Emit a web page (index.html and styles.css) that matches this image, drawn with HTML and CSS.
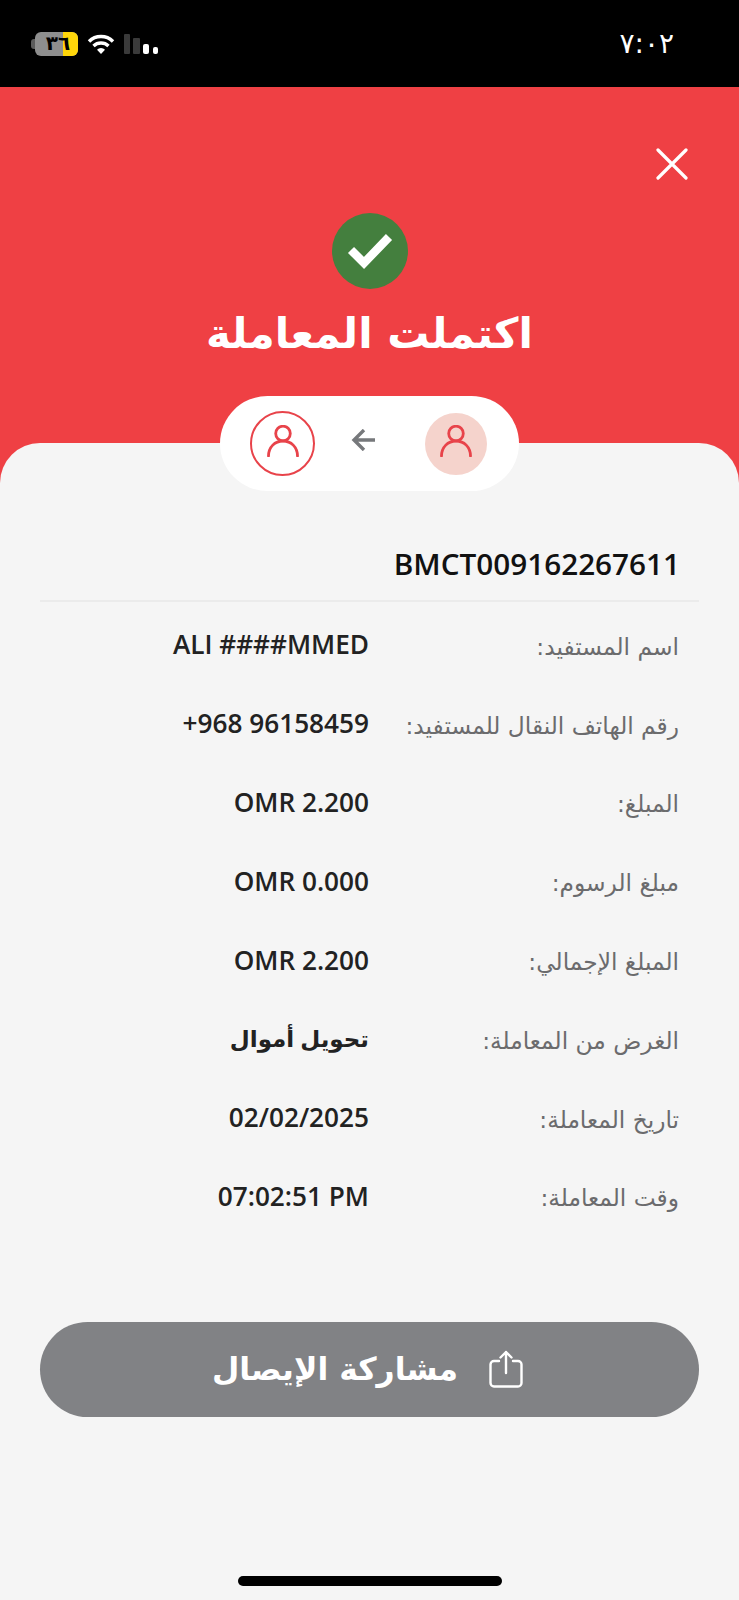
FILE: index.html
```html
<!DOCTYPE html>
<html lang="ar" dir="rtl">
<head>
    <meta charset="UTF-8">
    <meta name="viewport" content="width=device-width, initial-scale=1.0">
    <title>اكتملت المعاملة</title>
    <link rel="stylesheet" href="styles.css">
</head>
<body>
    <header class="statusBar">
        <span class="clock">٧:٠٢</span>
        <div class="statusIcons">
            <svg class="signal" width="36" height="22" viewBox="0 0 36 22">
                <rect x="0" y="1" width="6" height="20" rx="1" fill="#3a3a3a"/>
                <rect x="9" y="5" width="7" height="16" rx="1" fill="#3a3a3a"/>
                <rect x="19" y="11" width="6" height="10" rx="2" fill="#fff"/>
                <rect x="29" y="14" width="5" height="7" rx="2" fill="#fff"/>
            </svg>
            <svg class="wifi" width="28" height="22" viewBox="0 0 28 22" fill="none" stroke="#fff" stroke-width="3.4">
                <path d="M2 8.500a17 17 0 0 1 24 0"/>
                <path d="M6.500 13a11 11 0 0 1 15 0"/>
                <path d="M14 21l-4-4.200a5.500 5.500 0 0 1 8 0z" fill="#fff" stroke="none"/>
            </svg>
            <div class="battery"><span class="batteryFill"></span><span class="batteryText">٣٦</span></div>
        </div>
    </header>

    <section class="hero">
        <button class="closeBtn" aria-label="إغلاق">
            <svg width="32" height="32" viewBox="0 0 32 32" fill="none" stroke="#fff" stroke-width="3.200" stroke-linecap="round">
                <path d="M2 2l28 28M30 2L2 30"/>
            </svg>
        </button>
        <div class="checkCircle">
            <svg width="76" height="76" viewBox="0 0 76 76" fill="none" stroke="#fff" stroke-width="8.500">
                <path d="M19 37l13 13 25-26"/>
            </svg>
        </div>
        <h1 class="title">اكتملت المعاملة</h1>
        <div class="transferPill">
            <div class="avatar avatarFrom">
                <svg width="32" height="32" viewBox="0 0 32 32" fill="none" stroke="#e8434a" stroke-width="2.800" stroke-linecap="round">
                    <circle cx="16" cy="8.500" r="7.300"/>
                    <path d="M1.500 31C1.500 22 8 16 16 16s14.500 6 14.500 15"/>
                </svg>
            </div>
            <svg class="arrow" width="24" height="22" viewBox="0 0 24 22" fill="none" stroke="#76787b" stroke-width="3.400">
                <path d="M24 11H3M13 1L3 11l10 10"/>
            </svg>
            <div class="avatar avatarTo">
                <svg width="32" height="32" viewBox="0 0 32 32" fill="none" stroke="#e8434a" stroke-width="2.800" stroke-linecap="round">
                    <circle cx="16" cy="8.500" r="7.300"/>
                    <path d="M1.500 31C1.500 22 8 16 16 16s14.500 6 14.500 15"/>
                </svg>
            </div>
        </div>
    </section>

    <main class="sheet">
        <div class="reference">BMCT009162267611</div>

        <div class="details">
            <div class="label">اسم المستفيد:</div>
            <div class="value">ALI ####MMED</div>

            <div class="label">رقم الهاتف النقال للمستفيد:</div>
            <div class="value">+968 96158459</div>

            <div class="label">المبلغ:</div>
            <div class="value">OMR 2.200</div>

            <div class="label">مبلغ الرسوم:</div>
            <div class="value">OMR 0.000</div>

            <div class="label">المبلغ الإجمالي:</div>
            <div class="value">OMR 2.200</div>

            <div class="label">الغرض من المعاملة:</div>
            <div class="value valueAr">تحويل أموال</div>

            <div class="label">تاريخ المعاملة:</div>
            <div class="value">02/02/2025</div>

            <div class="label">وقت المعاملة:</div>
            <div class="value">07:02:51 PM</div>
        </div>

        <button class="shareBtn">
            <svg width="34" height="38" viewBox="0 0 34 38" fill="none" stroke="#fff" stroke-width="2.400" stroke-linecap="round" stroke-linejoin="round">
                <path d="M10 11H5a3.500 3.500 0 0 0-3.500 3.500V33A3.500 3.500 0 0 0 5 36.500h24a3.500 3.500 0 0 0 3.500-3.500V14.500A3.500 3.500 0 0 0 29 11h-5"/>
                <path d="M17 23V2M11.500 7.500L17 2l5.500 5.500"/>
            </svg>
            <span>مشاركة الإيصال</span>
        </button>

        <div class="homeBar"></div>
    </main>
</body>
</html>
```

FILE: styles.css
```css
* {
    box-sizing: border-box;
}
body {
    font-family: "Open Sans", "DejaVu Sans", sans-serif;
    margin: 0;
    padding: 0;
    width: 739px;
    height: 1600px;
    display: flex;
    flex-direction: column;
    background-color: #f5f5f5;
    overflow: hidden;
}

/* status bar */
.statusBar {
    height: 87px;
    flex: none;
    background-color: #000;
    color: #fff;
    display: flex;
    justify-content: space-between;
    align-items: flex-start;
    padding: 32px 65px 0 31px;
}
.clock {
    font-family: "DejaVu Sans", sans-serif;
    font-size: 28px;
    line-height: 24px;
    letter-spacing: -5px;
}
.statusIcons {
    display: flex;
    align-items: flex-start;
    gap: 9px;
}
.signal, .wifi {
    margin-top: 1px;
}
.battery {
    position: relative;
    width: 43px;
    height: 24px;
    border-radius: 6px;
    background-color: #8e8e8e;
    margin-left: 4px;
}
.battery::before {
    content: "";
    position: absolute;
    left: -4px;
    top: 7px;
    width: 4px;
    height: 10px;
    border-radius: 3px 0 0 3px;
    background-color: #5c5c5c;
}
.batteryFill {
    position: absolute;
    top: 0;
    bottom: 0;
    right: 0;
    width: 15px;
    border-radius: 0 6px 6px 0;
    background-color: #ffd60a;
}
.batteryText {
    position: absolute;
    inset: 0 -3px 0 0;
    text-align: center;
    font-family: "DejaVu Sans", sans-serif;
    font-weight: bold;
    font-size: 20px;
    line-height: 22px;
    color: #000;
}

/* red part */
.hero {
    height: 396px;
    flex: none;
    background-color: #ef4044;
    display: flex;
    flex-direction: column;
    align-items: center;
    padding-top: 61px;
}
.closeBtn {
    align-self: flex-start;
    margin-right: 51px;
    padding: 0;
    border: none;
    background: none;
    height: 32px;
}
.checkCircle {
    width: 76px;
    height: 76px;
    margin-top: 33px;
    border-radius: 50%;
    background-color: #447f3e;
}
.title {
    margin: 19px 0 0;
    height: 52px;
    font-family: "DejaVu Sans", sans-serif;
    font-size: 42px;
    line-height: 52px;
    font-weight: bold;
    color: #fff;
}
.transferPill {
    position: relative;
    z-index: 1;
    flex: none;
    width: 299px;
    height: 95px;
    margin-top: 36px;
    padding-right: 32px;
    border-radius: 48px;
    background-color: #fff;
    display: flex;
    flex-direction: row-reverse;
    justify-content: flex-end;
    align-items: center;
}
.avatar {
    display: flex;
    align-items: center;
    justify-content: center;
    border-radius: 50%;
}
.avatar svg {
    margin-bottom: 5px;
}
.avatarFrom {
    width: 65px;
    height: 65px;
    border: 2px solid #e8434a;
}
.avatarTo {
    width: 62px;
    height: 62px;
    background-color: #f5d3cc;
}
.arrow {
    margin: 0 50px 8px 36px;
}

/* gray sheet */
.sheet {
    flex: 1;
    position: relative;
    margin-top: -40px;
    padding: 0 40px;
    border-radius: 40px 40px 0 0;
    background-color: #f5f5f5;
    display: flex;
    flex-direction: column;
}
.reference {
    height: 159px;
    padding: 96px 19px 0 0;
    direction: ltr;
    text-align: right;
    font-size: 29.700px;
    line-height: 50px;
    font-weight: 600;
    color: #111;
    border-bottom: 2px solid #ebebeb;
}
.details {
    display: grid;
    grid-template-columns: 310px 1fr;
    grid-auto-rows: 78.800px;
    padding: 3px 20px 0 0;
    align-items: center;
}
.label {
    font-family: "DejaVu Sans", sans-serif;
    font-size: 23.300px;
    color: #6b6b6d;
    padding-top: 4px;
}
.value {
    direction: ltr;
    text-align: right;
    font-size: 26.200px;
    font-weight: 600;
    color: #222;
}
.valueAr {
    font-size: 23px;
    font-weight: bold;
}
.shareBtn {
    height: 95px;
    margin-top: 86.500px;
    flex: none;
    border: none;
    border-radius: 48px;
    background-color: #818285;
    display: flex;
    align-items: center;
    justify-content: center;
    gap: 31px;
    padding: 0 4px 0 0;
}
.shareBtn span {
    font-family: "DejaVu Sans", sans-serif;
    font-size: 31.500px;
    font-weight: bold;
    color: #fff;
}
.homeBar {
    width: 264px;
    height: 10px;
    margin: auto auto 14px;
    border-radius: 5px;
    background-color: #000;
}
```
